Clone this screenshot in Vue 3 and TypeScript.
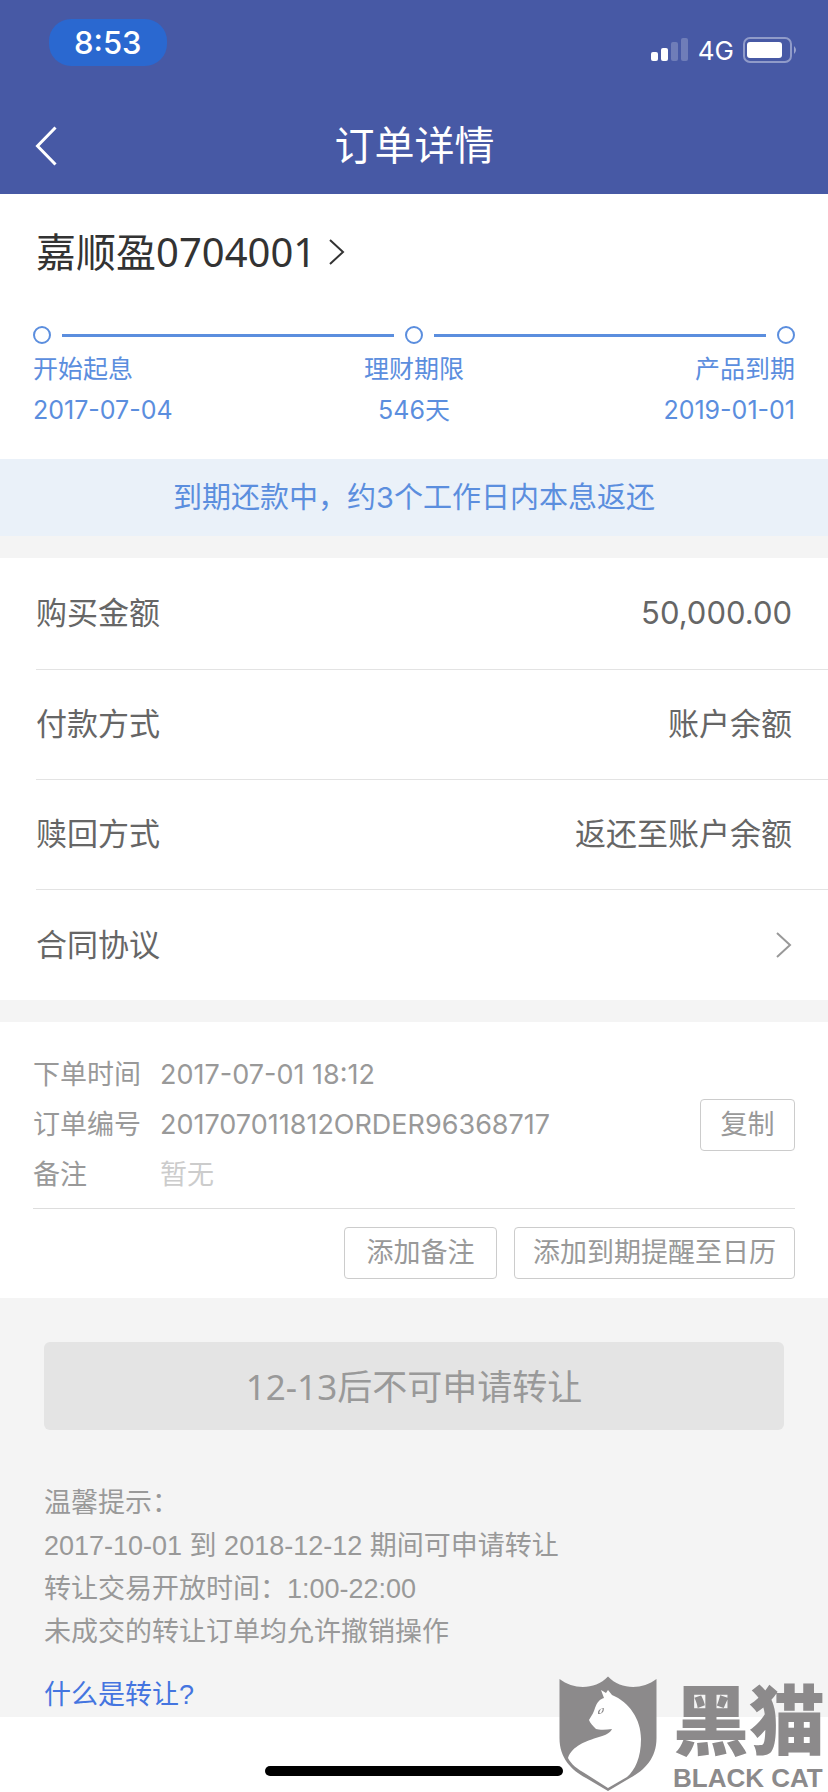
<script setup lang="ts">
interface Stage {
  label: string
  value: string
}

interface Detail {
  label: string
  value: string
}

const stages: Stage[] = [
  { label: '开始起息', value: '2017-07-04' },
  { label: '理财期限', value: '546天' },
  { label: '产品到期', value: '2019-01-01' },
]

const details: Detail[] = [
  { label: '购买金额', value: '50,000.00' },
  { label: '付款方式', value: '账户余额' },
  { label: '赎回方式', value: '返还至账户余额' },
]

const tips: string[] = [
  '温馨提示：',
  '2017-10-01 到 2018-12-12 期间可申请转让',
  '转让交易开放时间：1:00-22:00',
  '未成交的转让订单均允许撤销操作',
]

const orderNumber = '201707011812ORDER96368717'

function copyOrderNumber(): void {
  navigator.clipboard?.writeText(orderNumber)
}
</script>

<template>
  <div class="page" lang="zh-CN">
    <header class="header">
      <div class="status">
        <span class="clock">8:53</span>
        <div class="indicators">
          <svg class="signal" viewBox="0 0 38 24" aria-hidden="true">
            <rect x="0" y="14" width="7" height="9" rx="2" />
            <rect x="10" y="10" width="7" height="13" rx="2" />
            <rect x="20" y="4" width="7" height="19" rx="2" opacity="0.22" />
            <rect x="30" y="0" width="7" height="23" rx="2" opacity="0.22" />
          </svg>
          <span class="network">4G</span>
          <svg class="battery" viewBox="0 0 54 26" aria-hidden="true">
            <rect x="1" y="1" width="47" height="24" rx="6" fill="none" stroke="#fff" stroke-width="2" opacity="0.4" />
            <rect x="4" y="5" width="35" height="16" rx="3" fill="#fff" />
            <path d="M51 9 Q55 13 51 17 Z" fill="#fff" opacity="0.45" />
          </svg>
        </div>
      </div>
      <div class="navbar">
        <button class="back" type="button" aria-label="返回">
          <svg viewBox="0 0 22 40" aria-hidden="true">
            <path d="M20.500 1.500 L2.500 20 L20.500 38.500" />
          </svg>
        </button>
        <h1 class="title">订单详情</h1>
      </div>
    </header>

    <section class="product">
      <a class="product-name" href="#product">
        <span>嘉顺盈0704001</span>
        <svg class="name-arrow" viewBox="0 0 17 28" aria-hidden="true">
          <path d="M2 2 L15 14 L2 26" />
        </svg>
      </a>
      <div class="track" aria-hidden="true">
        <span class="dot"></span>
        <span class="line"></span>
        <span class="dot"></span>
        <span class="line"></span>
        <span class="dot"></span>
      </div>
      <div class="stages">
        <div v-for="stage in stages" :key="stage.label" class="stage">
          <span>{{ stage.label }}</span>
          <span>{{ stage.value }}</span>
        </div>
      </div>
    </section>

    <p class="notice">到期还款中，约3个工作日内本息返还</p>

    <section class="details">
      <div v-for="detail in details" :key="detail.label" class="row">
        <span>{{ detail.label }}</span>
        <span>{{ detail.value }}</span>
      </div>
      <a class="row" href="#contract">
        <span>合同协议</span>
        <svg class="row-arrow" viewBox="0 0 17 28" aria-hidden="true">
          <path d="M2 2 L15 14 L2 26" />
        </svg>
      </a>
    </section>

    <section class="order">
      <div class="order-info">
        <div class="order-line">
          <span class="order-label">下单时间</span>
          <span>2017-07-01 18:12</span>
        </div>
        <div class="order-line">
          <span class="order-label">订单编号</span>
          <span class="order-value">{{ orderNumber }}</span>
          <button class="outline copy" type="button" @click="copyOrderNumber">复制</button>
        </div>
        <div class="order-line">
          <span class="order-label">备注</span>
          <span class="empty">暂无</span>
        </div>
      </div>
      <div class="order-actions">
        <button class="outline note" type="button">添加备注</button>
        <button class="outline remind" type="button">添加到期提醒至日历</button>
      </div>
    </section>

    <section class="transfer">
      <button class="transfer-button" type="button" disabled>12-13后不可申请转让</button>
      <div class="tips">
        <p v-for="tip in tips" :key="tip">{{ tip }}</p>
      </div>
      <a class="help" href="#transfer">什么是转让?</a>
    </section>

    <footer class="footer">
      <span class="home-bar"></span>
    </footer>

    <div class="watermark">
      <svg class="shield" viewBox="0 0 98 116" aria-hidden="true">
        <path
          d="M0.500 3 C15 14 36 14 49 0.500 C62 14 83 14 97.500 3 V62 C97.500 82 86 94 71 102 L49 115 L27 102 C12 94 0.500 82 0.500 62 Z"
          fill="#8c8a8b"
        />
        <path
          d="M42 14 L47 17 L49 14 L53 19 C70 26 82 43 82 63 C82 82 76 94 68 101 L49 112 L27 98 C18 93 12 88 9 82 C13 70 27 65 40 61 C47 59 51 57 53 53 C47 54 40 54 37 53 C34 50 31 47 30 44 C33 39 35 36 36 32 C38 26 41 23 45 22 Z"
          fill="#fff"
        />
        <path d="M39 38 Q38 33 45 32 Q45 38 39 38 Z" fill="#8c8a8b" />
        <path d="M43 33 L41 37" stroke="#fff" stroke-width="2" />
      </svg>
      <div class="brand">
        <span class="brand-zh">黑猫</span>
        <span class="brand-en">BLACK CAT</span>
      </div>
    </div>
  </div>
</template>

<style>
body {
  margin: 0;
  background: #fff;
}
</style>

<style scoped>
.page {
  position: relative;
  display: flex;
  flex-direction: column;
  min-height: 100vh;
  background: #f4f4f4;
  color: #666;
  font-family: Inter, "Noto Sans CJK SC", sans-serif;
  font-weight: 400;
  line-height: 1.5;
}

.page * {
  box-sizing: border-box;
}

p,
h1 {
  margin: 0;
}

button {
  font: inherit;
}

a {
  color: inherit;
  text-decoration: none;
}

.header {
  padding: 19px 31px 21px 32px;
  background: #4759a5;
  color: #fff;
}

.status {
  display: flex;
  align-items: flex-start;
  justify-content: space-between;
  padding-left: 17px;
}

.clock {
  padding: 0 25px;
  border-radius: 22px;
  background: #2a68d0;
  font-size: 31px;
  font-weight: 500;
  line-height: 47px;
}

.indicators {
  display: flex;
  align-items: center;
  gap: 9px;
  height: 26px;
  margin-top: 18px;
}

.signal {
  width: 38px;
  height: 24px;
  fill: #fff;
}

.network {
  font-size: 26px;
}

.battery {
  width: 54px;
  height: 26px;
}

.navbar {
  display: grid;
  grid-template-columns: 40px 1fr 40px;
  align-items: center;
  margin-top: 52px;
}

.back {
  padding: 0 3px;
  border: 0;
  background: none;
}

.back svg {
  display: block;
  width: 22px;
  height: 40px;
  fill: none;
  stroke: #fff;
  stroke-width: 3;
}

.title {
  font-size: 40px;
  font-weight: 400;
  line-height: 55px;
  text-align: center;
}

.product {
  padding: 28px 33px;
  background: #fff;
  color: #5b8ede;
}

.product-name {
  display: flex;
  align-items: center;
  gap: 12px;
  padding-left: 3px;
  color: #333;
  font-family: "Noto Sans", "Noto Sans CJK SC", sans-serif;
  font-size: 40px;
  line-height: 60px;
}

.name-arrow,
.row-arrow {
  width: 17px;
  height: 28px;
  fill: none;
  stroke: #333;
  stroke-width: 2;
}

.row-arrow {
  stroke: #999;
}

.track {
  display: flex;
  align-items: center;
  gap: 11px;
  margin-top: 44px;
}

.dot {
  width: 18px;
  height: 18px;
  border: 2px solid #5b8ede;
  border-radius: 50%;
}

.line {
  flex: 1;
  height: 3px;
  background: #5b8ede;
}

.stages {
  display: grid;
  grid-template-columns: repeat(3, 1fr);
  margin-top: 5px;
  font-size: 25px;
  line-height: 41px;
}

.stage {
  display: flex;
  flex-direction: column;
  align-items: flex-start;
}

.stage:nth-child(2) {
  align-items: center;
}

.stage:nth-child(3) {
  align-items: flex-end;
}

.notice {
  background: #eaf1f9;
  color: #5b8ede;
  font-size: 29px;
  line-height: 77px;
  text-align: center;
}

.details {
  margin: 22px 0;
  padding-left: 36px;
  background: #fff;
  font-size: 31px;
}

.row {
  display: flex;
  align-items: center;
  justify-content: space-between;
  height: 110px;
  padding-right: 36px;
}

.row + .row {
  border-top: 1px solid #e3e3e3;
}

.details .row:first-child,
.details .row:last-child {
  height: 111px;
}

.order {
  padding: 28px 33px 19px;
  background: #fff;
  color: #999;
  font-size: 27px;
}

.order-info {
  padding-bottom: 8px;
  border-bottom: 1px solid #ddd;
}

.order-line {
  display: flex;
  align-items: center;
  height: 50px;
}

.order-label {
  width: 127px;
}

.order-value {
  flex: 1;
}

.empty {
  color: #ccc;
}

.outline {
  height: 52px;
  padding: 0;
  border: 1px solid #ccc;
  border-radius: 4px;
  background: #fff;
  color: #999;
}

.copy {
  width: 95px;
}

.note {
  width: 153px;
}

.remind {
  width: 281px;
}

.order-actions {
  display: flex;
  justify-content: flex-end;
  gap: 17px;
  margin-top: 18px;
}

.transfer {
  display: flex;
  flex-direction: column;
  padding: 44px 44px 0;
  color: #999;
  font-family: "Liberation Sans", "Noto Sans CJK SC", sans-serif;
  font-size: 27px;
  line-height: 43px;
}

.transfer-button {
  height: 88px;
  border: 0;
  border-radius: 6px;
  background: #e4e4e4;
  color: #999;
  font-family: "Noto Sans", "Noto Sans CJK SC", sans-serif;
  font-size: 35px;
}

.tips {
  margin-top: 52px;
}

.help {
  align-self: flex-start;
  margin-top: 20px;
  color: #4475e0;
}

.footer {
  display: flex;
  flex: 1;
  align-items: flex-end;
  justify-content: center;
  min-height: 75px;
  padding-bottom: 16px;
  background: #fff;
}

.home-bar {
  width: 36%;
  height: 10px;
  border-radius: 5px;
  background: #000;
}

.watermark {
  position: absolute;
  right: 0;
  bottom: 0;
  display: flex;
  align-items: flex-start;
  gap: 16px;
  color: #8c8a8b;
}

.shield {
  width: 98px;
  height: 116px;
}

.brand {
  display: flex;
  flex-direction: column;
  width: 155px;
  padding-top: 6px;
  font-family: "Liberation Sans", "Noto Sans CJK SC", sans-serif;
}

.brand-zh {
  font-size: 76px;
  font-weight: 900;
  line-height: 82px;
}

.brand-en {
  font-size: 26px;
  font-weight: 700;
  line-height: 28px;
}
</style>
